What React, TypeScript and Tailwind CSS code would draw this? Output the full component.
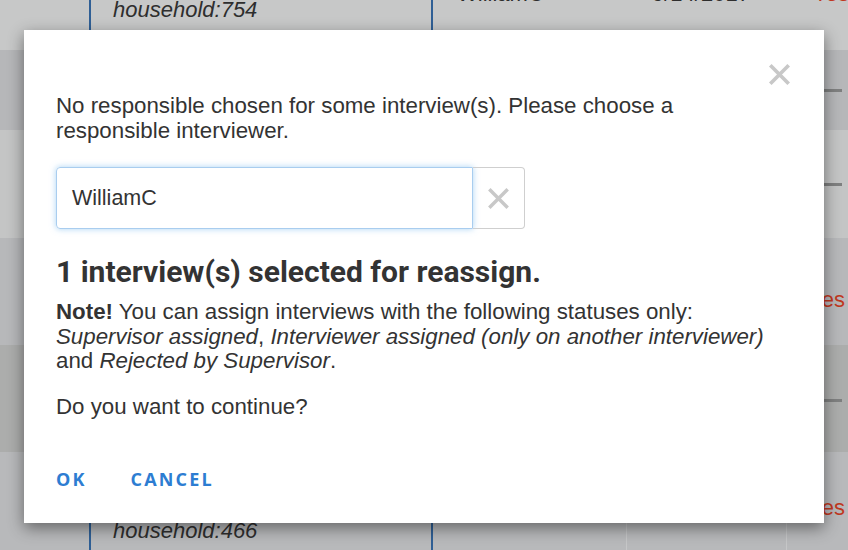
const rowBase = "grid grid-cols-[89px_342px_195px_160px_62px] font-['Liberation_Sans',Arial,sans-serif] text-[22px] leading-[25px] text-[#2e2e2e]";
const cellBlue = "border-l-2 border-[#2f5f95]";

function Dash() {
  return <div className="h-[3px] w-[20px] bg-[#7f8080]" />;
}

function Background() {
  return (
    <div className="flex h-[550px] w-[848px] flex-col overflow-hidden">
      <div className={`${rowBase} mt-[-57px] h-[107px] shrink-0 bg-[#c7c8c8]`}>
        <div />
        <div className={`${cellBlue} flex items-end pb-[28px] pl-[22px] italic`}>household:754</div>
        <div className={`${cellBlue} flex items-end pb-[44px] pl-[24px]`}>WilliamC</div>
        <div className="flex items-end pb-[44px] pl-[26px]">9/14/2017</div>
        <div className="flex items-end pb-[44px] pl-[27px] text-[#c0381f]">Yes</div>
      </div>
      <div className={`${rowBase} h-[80px] shrink-0 bg-[#b6b7b9]`}>
        <div />
        <div className={cellBlue} />
        <div className={cellBlue} />
        <div />
        <div className="flex items-center pl-[36px]"><Dash /></div>
      </div>
      <div className={`${rowBase} h-[108px] shrink-0 bg-[#c4c5c5]`}>
        <div />
        <div className={cellBlue} />
        <div className={cellBlue} />
        <div />
        <div className="flex items-center pl-[36px]"><Dash /></div>
      </div>
      <div className={`${rowBase} h-[107px] shrink-0 bg-[#b7b8ba]`}>
        <div />
        <div className={cellBlue} />
        <div className={cellBlue} />
        <div />
        <div className="flex items-center pl-[23px] pt-[16px] text-[#c0381f]">Yes</div>
      </div>
      <div className={`${rowBase} h-[107px] shrink-0 bg-[#acadac]`}>
        <div />
        <div className={cellBlue} />
        <div className={cellBlue} />
        <div />
        <div className="flex items-center pl-[36px] pt-[3px]"><Dash /></div>
      </div>
      <div className={`${rowBase} h-[107px] shrink-0 bg-[#b8b9bb]`}>
        <div />
        <div className={`${cellBlue} flex flex-col pl-[22px] pt-[41px] italic`}>
          <span>19-00-00-04</span>
          <span>household:466</span>
        </div>
        <div className={cellBlue} />
        <div className="border-l border-[#c6c7c8]" />
        <div className="flex border-l border-[#c6c7c8] pl-[22px] pt-[43px] text-[#c0381f]">Yes</div>
      </div>
    </div>
  );
}

function Cross({ size, stroke }: { size: number; stroke: number }) {
  return (
    <svg width={size} height={size} viewBox="0 0 20 20" fill="none">
      <path d="M2 2 L18 18 M18 2 L2 18" stroke="currentColor" strokeWidth={stroke} />
    </svg>
  );
}

function Modal() {
  return (
    <div className="absolute left-[24px] top-[30px] h-[493px] w-[800px] bg-white font-['Liberation_Sans',Arial,sans-serif] text-[#333] shadow-[0_5px_15px_rgba(0,0,0,0.45)]">
      <button className="absolute right-[33px] top-[33px] text-[#c8c8c8]">
        <Cross size={23} stroke={3.2} />
      </button>

      <div className="flex flex-col px-8 pt-[63px]">
        <p className="text-[22.3px] leading-[25px]">
          No responsible chosen for some interview(s). Please choose a
          <br />
          responsible interviewer.
        </p>

        <div className="mt-[24px] flex h-[62px] w-[469px]">
          <div className="flex flex-1 items-center rounded-l-[4px] border border-[#a9cdef] pl-[15px] text-[21.5px] shadow-[0_0_6px_rgba(102,175,233,0.55)]">
            WilliamC
          </div>
          <div className="flex w-[52px] items-center justify-center rounded-r-[4px] border border-l-0 border-[#cfcfcf] text-[#c8c8c8]">
            <Cross size={23} stroke={3} />
          </div>
        </div>

        <h2 className="mt-[26px] font-['Roboto',sans-serif] text-[30px] font-bold leading-[34px] text-[#333]">
          1 interview(s) selected for reassign.
        </h2>

        <p className="mt-[11px] text-[22.3px] leading-[24.5px]">
          <b>Note!</b> You can assign interviews with the following statuses only:
          <br />
          <i>Supervisor assigned</i>, <i>Interviewer assigned (only on another interviewer)</i>
          <br />
          and <i>Rejected by Supervisor</i>.
        </p>

        <p className="mt-[21px] text-[22.3px] leading-[24.5px]">Do you want to continue?</p>

        <div className="mt-[48px] flex gap-[44px] font-['Open_Sans',sans-serif] text-[18px] font-bold leading-[24px] tracking-[0.12em] text-[#2d7dd2]">
          <button>OK</button>
          <button>CANCEL</button>
        </div>
      </div>
    </div>
  );
}

export default function App() {
  return (
    <div className="relative h-[550px] w-[848px] overflow-hidden">
      <Background />
      <Modal />
    </div>
  );
}
